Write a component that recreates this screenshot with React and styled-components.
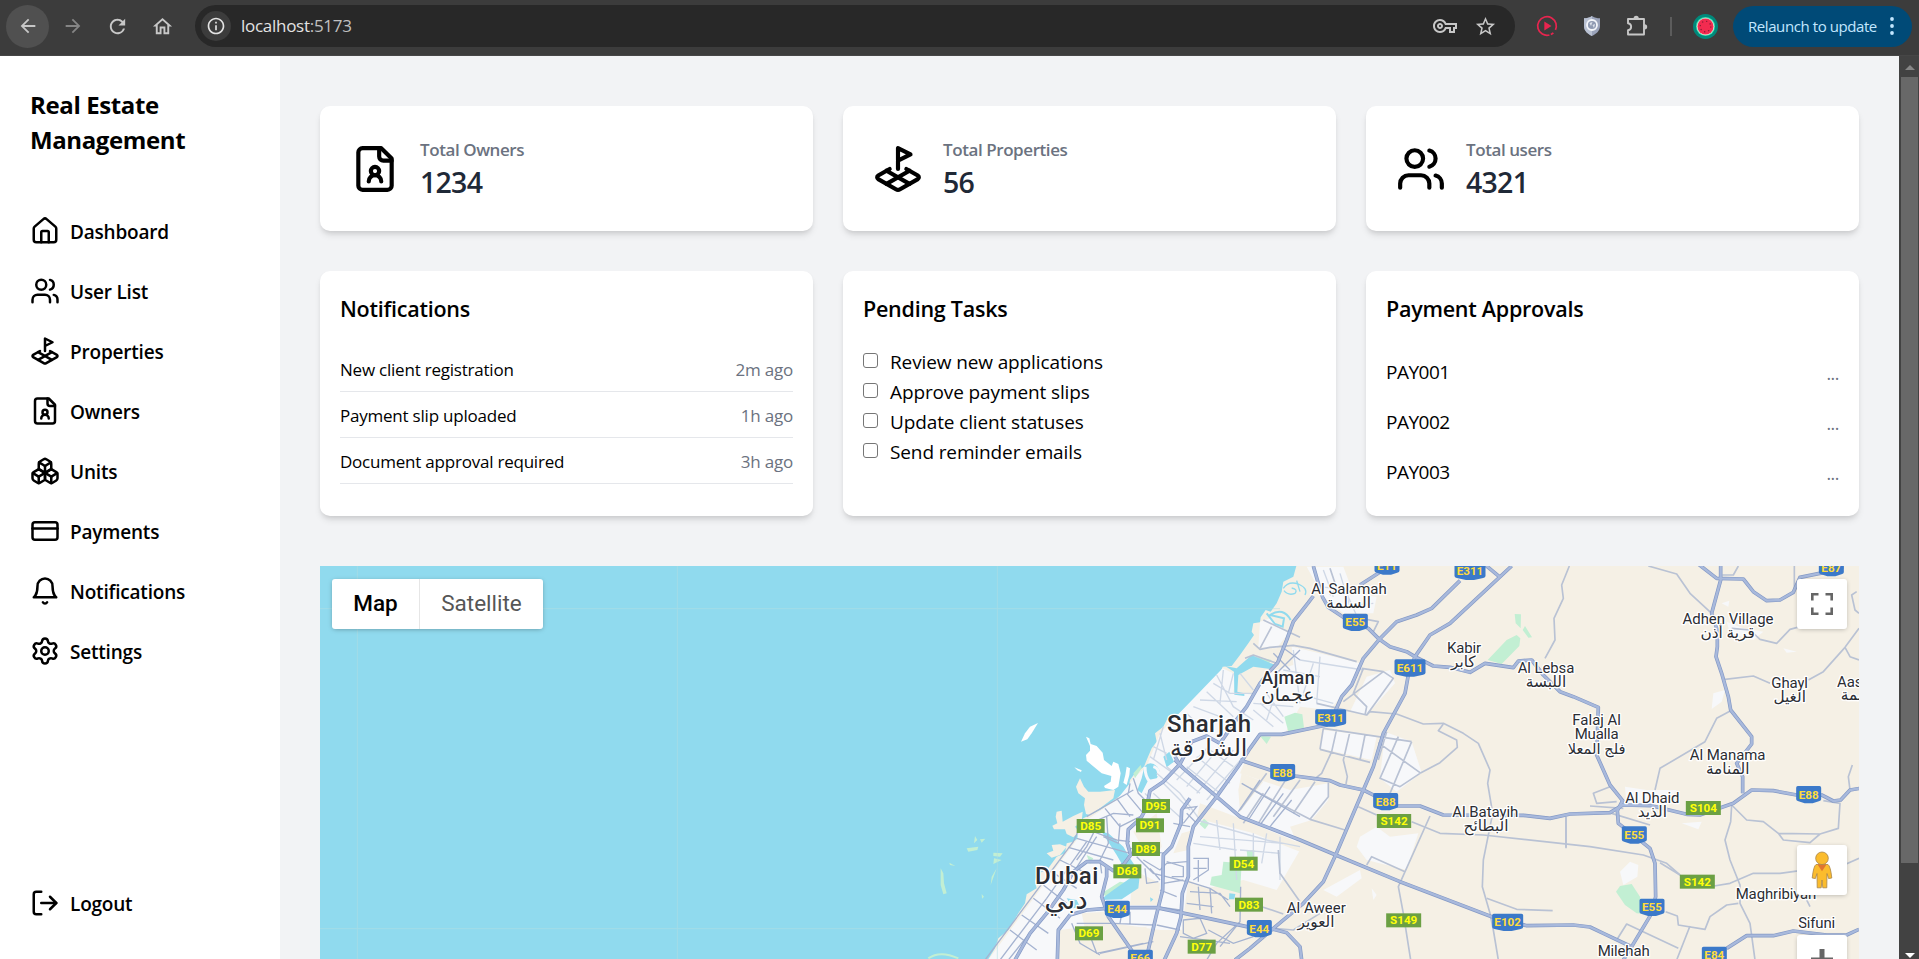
import React from 'react';
import styled, { createGlobalStyle, css } from 'styled-components';
import {
  Users, LandPlot, Boxes, CreditCard, Settings, LogOut, House,
} from 'lucide-react';
import {
  MdArrowBack, MdArrowForward, MdRefresh, MdOutlineHome, MdInfoOutline,
  MdOutlineVpnKey, MdStarOutline,
} from 'react-icons/md';

const ui = `"Open Sans", "Noto Sans", sans-serif`;

const GlobalStyle = createGlobalStyle`
  *, *::before, *::after { box-sizing: border-box; }
  html, body { margin: 0; padding: 0; }
  body { font-family: ${ui}; color: #000; background: #f2f3f5; overflow: hidden; }
  h1, h2, p, ul { margin: 0; padding: 0; }
  ul { list-style: none; }
  button { border: 0; padding: 0; background: none; font: inherit; color: inherit; }
`;

const Screen = styled.div`
  width: 1919px;
  height: 959px;
  display: flex;
  flex-direction: column;
  overflow: hidden;
`;

/* ---------- browser bar ---------- */

const BrowserBar = styled.header`
  flex: 0 0 56px;
  display: flex;
  align-items: center;
  padding: 0 7px 3px 6px;
  background: #3c3c3c;
  border-bottom: 1px solid #464646;
`;

const BarButton = styled.button`
  width: ${(p) => p.$width || 45}px;
  height: 42px;
  display: flex;
  align-items: center;
  justify-content: center;
  color: ${(p) => (p.$muted ? '#858585' : '#c7c7c7')};
`;

const BackButton = styled(BarButton)`
  width: 43px;
  height: 43px;
  margin-right: 1px;
  border-radius: 50%;
  background: #505050;
`;

const Omnibox = styled.div`
  flex: 1;
  height: 42px;
  margin: 0 9px 0 10px;
  padding: 0 10px 0 6px;
  display: flex;
  align-items: center;
  border-radius: 21px;
  background: #282828;
`;

const SiteInfo = styled.span`
  width: 30px;
  height: 30px;
  display: flex;
  align-items: center;
  justify-content: center;
  border-radius: 50%;
  background: #3c3c3c;
  color: #e3e3e3;
`;

const Url = styled.span`
  flex: 1;
  padding: 0 0 0 10px;
  font-size: 17px;
  line-height: 24px;
  letter-spacing: -0.28px;
  color: #e3e3e3;
`;

const Port = styled.span`
  color: #c0c0c0;
`;

const BarDivider = styled.span`
  width: 2px;
  height: 19px;
  margin: 0 21px 0 11px;
  background: #5c5c5c;
`;

const Relaunch = styled.button`
  width: 179px;
  height: 41px;
  margin-left: 15px;
  padding: 0 18px 0 15px;
  display: flex;
  align-items: center;
  justify-content: space-between;
  border-radius: 21px;
  background: #004a77;
  color: #c2e7ff;
  font-size: 15px;
  letter-spacing: -0.42px;
  white-space: nowrap;
`;

/* ---------- page frame ---------- */

const Page = styled.div`
  flex: 1;
  min-height: 0;
  display: flex;
`;

const Sidebar = styled.aside`
  flex: 0 0 280px;
  display: flex;
  flex-direction: column;
  padding: 31px 30px 40px;
  background: #fff;
`;

const Brand = styled.h1`
  font-size: 24px;
  font-weight: 700;
  line-height: 35px;
  letter-spacing: -0.38px;
`;

const Nav = styled.nav`
  flex: 1;
  display: flex;
  flex-direction: column;
  gap: 30px;
  margin-top: 60px;
`;

const NavItem = styled.a`
  height: 30px;
  display: flex;
  align-items: center;
  gap: 10px;
  font-size: 19px;
  font-weight: 550;
  line-height: 30px;
  letter-spacing: -0.2px;

  svg { flex: none; margin-top: -2px; }
`;

const Main = styled.main`
  flex: 1;
  min-width: 0;
  display: flex;
  flex-direction: column;
  padding: 50px 40px 0;
  background: #f2f3f5;
`;

const CardGrid = styled.section`
  display: grid;
  grid-template-columns: repeat(3, 1fr);
  gap: 30px;
  margin-bottom: ${(p) => p.$below}px;
`;

const cardSurface = css`
  border-radius: 10px;
  background: #fff;
  box-shadow: 0 5px 7.5px -1px rgba(0, 0, 0, 0.1), 0 2.5px 5px -2px rgba(0, 0, 0, 0.1);
`;

const StatCard = styled.article`
  ${cardSurface}
  height: 125px;
  padding: 2px 30px 0;
  display: flex;
  align-items: center;
  gap: 20px;

  > svg { margin-top: -2px; }
`;

const StatLabel = styled.p`
  font-size: 17px;
  font-weight: 550;
  line-height: 25px;
  letter-spacing: -0.42px;
  color: #6b7280;
`;

const StatValue = styled.p`
  padding-bottom: 1px;
  font-size: 28.5px;
  font-weight: 550;
  line-height: 40px;
  letter-spacing: -0.75px;
  color: #1f2937;
`;

const ListCard = styled.article`
  ${cardSurface}
  height: 245px;
  padding: 20px;
`;

const CardTitle = styled.h2`
  margin-bottom: 20px;
  font-size: 21.5px;
  font-weight: 550;
  line-height: 35px;
  letter-spacing: -0.25px;
`;

const NoticeRow = styled.li`
  height: 46px;
  padding-top: 1px;
  display: flex;
  align-items: center;
  justify-content: space-between;
  border-bottom: 1px solid #e5e7eb;
  font-size: 17px;
  letter-spacing: -0.22px;
`;

const Muted = styled.span`
  color: #6b7280;
`;

const TaskList = styled.ul`
  padding-top: 1px;
`;

const TaskRow = styled.li`
  height: 30px;
  display: flex;
  align-items: center;
  gap: 12px;
  font-size: 19px;
  letter-spacing: -0.12px;
`;

const Checkbox = styled.span`
  width: 15px;
  height: 15px;
  margin-top: -3px;
  border: 1px solid #767676;
  border-radius: 3px;
  background: #fff;
`;

const PaymentRow = styled.li`
  height: 50px;
  padding-top: 1px;
  display: flex;
  align-items: center;
  justify-content: space-between;
  font-size: 19px;
  letter-spacing: -0.5px;
`;

const Dots = styled(Muted)`
  padding-top: 2px;
  font-size: 17.5px;
  letter-spacing: -0.4px;
`;

/* ---------- scrollbar ---------- */

const Scrollbar = styled.div`
  flex: 0 0 20px;
  display: flex;
  flex-direction: column;
  align-items: center;
  padding: 9px 1px 0 2px;
  background: #424242;
`;

const Thumb = styled.div`
  width: 17px;
  height: 786px;
  margin: 7px 0 90px;
  background: #686868;
`;

const Arrow = styled.span`
  border: 5px solid transparent;
  border-top-width: ${(p) => (p.$down ? 5 : 0)}px;
  border-bottom-width: ${(p) => (p.$down ? 0 : 5)}px;
  ${(p) => (p.$down ? 'border-top-color: #fff' : 'border-bottom-color: #868686')};
`;

/* ---------- map ---------- */

const MapFrame = styled.section`
  flex: 1;
  min-height: 0;
  position: relative;
  overflow: hidden;

  > svg { display: block; }
`;

const MapType = styled.div`
  position: absolute;
  top: 13px;
  left: 12px;
  height: 50px;
  display: flex;
  border-radius: 3px;
  background: #fff;
  box-shadow: 0 1px 5px -1px rgba(0, 0, 0, 0.35);
  font-family: Roboto, sans-serif;
  font-size: 22.5px;
  line-height: 47px;
`;

const MapTypeOption = styled.button`
  width: ${(p) => p.$width}px;
  padding-bottom: 2px;
  color: ${(p) => (p.$active ? '#000' : '#565656')};
  font-weight: ${(p) => (p.$active ? 500 : 400)};
  & + & { border-left: 1px solid #e6e6e6; }
`;

const MapButton = styled.button`
  position: absolute;
  top: ${(p) => p.$top}px;
  right: 12px;
  width: 50px;
  height: 50px;
  display: flex;
  align-items: center;
  justify-content: center;
  border-radius: 3px;
  background: #fff;
  box-shadow: 0 1px 5px -1px rgba(0, 0, 0, 0.3);
`;

const MapText = styled.text`
  font-family: Roboto, "DejaVu Sans", sans-serif;
  font-weight: ${(p) => (p.$city ? 500 : 400)};
  fill: #2b2d33;
  stroke: ${(p) => (p.$halo ? '#fff' : 'none')};
  stroke-width: 8px;
  stroke-linejoin: round;
  paint-order: stroke;
  text-anchor: middle;
`;

const ShieldText = styled.text`
  font-family: Roboto, sans-serif;
  font-weight: 700;
  font-size: 35px;
  text-anchor: middle;
  fill: ${(p) => p.$fill};
`;

/* The map is drawn on a canvas of three units to the pixel, in three sheets
   side by side: west starts at 0, mid at 1050, east at 1980. */
const SHEET = { w: 0, m: 1050, e: 1980 };

const HIGHWAYS = [
  ['w', 'M1240,108 L1225,128 L1180,185 L1160,240 L1133,308 L1108,335 L1080,370 L1040,440 L1005,485 L960,550 L920,528 L875,545 L840,612 L790,665 L750,692 L740,742 L722,775 L685,808 L682,850 L692,885 L672,912 L640,932 L600,905 L560,905 L520,935 L490,990 L440,1060 L390,1120 L345,1200'],
  ['w', 'M1680,62 L1595,145 L1550,165 L1490,185 L1438,238 L1390,295 L1355,375 L1325,410 L1305,455 L1280,495 L1145,523 L1080,523 L1050,565 L1020,612 L950,710 L880,800 L865,860 L865,950 L847,1000 L843,1070 L830,1120 L793,1200'],
  ['w', 'M825,590 L840,615'],
  ['m', 'M785,18 L600,190 L540,225 L495,290 L475,345 L465,400 L400,520 L370,620 L340,690 L257,885 L220,965 L160,1030 L70,1105 L0,1165 L-45,1200'],
  ['m', 'M190,18 L202,60 L218,112 L235,142 L280,172 L355,205 L388,238 L420,260 L470,275 L495,290 L550,318 L600,322 L660,337 L705,310 L790,323 L805,303 L845,300 L880,345 L930,395 L970,410 L1045,442 L1040,585 L1080,675 L1118,722 L1102,752 L1105,790 L1150,825 L1200,865 L1215,910 L1217,1010 L1205,1060 L1145,1160 L1120,1200'],
  ['w', 'M1020,600 L1110,630 L1185,648 L1290,662 L1320,675 L1390,690 L1430,710 L1490,738 L1560,738 L1630,765 L1870,766 L1950,775 L2010,762 L2130,758 L2168,735 L2255,737 L2360,763 L2400,765 L2500,730 L2555,690 L2620,692 L2690,705 L2765,705 L2800,723 L2822,720 L2850,690 L2880,685'],
  ['w', 'M825,600 L850,625 L950,710 L1020,770 L1200,840 L1307,885 L1500,965 L1775,1070 L1880,1097 L2020,1095 L2070,1101 L2110,1120 L2190,1158'],
  ['w', 'M472,1200 L475,1110 L510,1065 L560,1050 L620,1045 L690,1043 L770,1043 L900,1070 L1040,1100 L1120,1108 L1160,1118 L1200,1160 L1205,1200'],
  ['w', 'M715,1200 L625,1070 L605,1010 L620,950 L620,918'],
  ['w', 'M870,715 L845,750 L843,790 L815,860 L790,885 L788,990 L768,1070 L738,1200'],
  ['m', 'M330,75 L400,30'],
  ['m', 'M700,10 L748,50'],
  ['e', 'M412,10 L470,55 L550,57 L580,95 L620,122 L660,120 L700,97 L720,52 L790,38 L850,20'],
  ['e', 'M482,18 L482,60 L455,160 L472,210 L472,260 L468,290 L485,340 L505,410 L512,450 L575,530 L575,552 L530,610 L548,650 L548,700'],
  ['e', 'M500,1165 L560,1127 L640,1127 L700,1113 L800,1125 L860,1125 L897,1108'],
];

const ROADS = [
  ['m', 'M335,325 L400,335 L430,355 L350,465 L200,430'],
  ['m', 'M350,465 L360,455 L440,462 L520,492 L580,490 L640,520 L685,550 L720,630 L713,670 L728,760 L710,850 L700,900 L697,980 L720,1060 L730,1110 L745,1200'],
  ['m', 'M580,492 L565,512 L620,540 L622,562 L570,608 L510,640'],
  ['m', 'M10,250 L30,268 L60,262 L130,256 L180,265 L320,305'],
  ['m', 'M220,505 L485,545 M210,568 L360,607 M220,505 L210,568 M260,508 L245,575 L215,640 L190,660 M300,515 L280,600 L292,650 L288,672 M345,525 L330,600 M385,548 L510,638 M410,515 L385,600 M485,545 L420,700 M445,530 L390,655 L450,680 L510,640'],
  ['m', 'M340,325 L310,400 L350,440 L345,465 M400,335 L340,380 L280,425'],
  ['m', 'M235,668 L235,710 L180,778 M0,685 L180,778 L285,810 M110,655 L25,790 M150,660 L70,770 M195,665 L130,760 M50,640 L-30,750 M40,700 L-20,790'],
  ['m', 'M325,740 L380,765 M485,785 L570,820 L700,825 L1020,860 L1180,885 L1250,910 L1290,945'],
  ['m', 'M540,768 L445,980 L460,1060 L482,1200 M350,915 L365,890 L465,935'],
  ['m', 'M710,1015 L800,1048 L908,1052 M948,772 L948,865'],
  ['m', 'M958,18 L935,75 L940,115 L912,175 L915,240 L885,295'],
  ['m', 'M85,870 L90,940 L150,1025 M35,1040 L100,1062 M70,1105 L130,1110 L210,1060'],
  ['m', 'M240,25 L260,85 L240,105 M280,165 L385,185 L370,215'],
  ['e', 'M265,18 L350,42 L390,100 L455,160 M487,45 L520,45 L535,18 M703,18 L703,100'],
  ['e', 'M495,358 L580,348 L630,370 M745,360 L790,335 L855,262 L897,205 M855,262 L870,290 L897,300'],
  ['e', 'M890,95 L875,105 L885,150 L897,160'],
  ['e', 'M515,205 L570,210 L600,238 L650,250 L690,208 L720,200'],
  ['e', 'M512,452 L470,475 L435,545 L300,625 L285,690'],
  ['e', 'M515,735 L512,785 L495,840 L510,900 L540,975 L540,1030 L570,1090 L585,1200'],
  ['e', 'M515,735 L560,780 L610,785 L655,820 L780,822 L835,805 L840,730 L790,722 M655,820 L670,840 L750,848 L780,822'],
  ['e', 'M360,945 L300,908 M462,978 L510,970 L580,940 L660,940 L720,932 M840,920 L897,895'],
  ['e', 'M317,1055 L352,1068 L355,1095 L435,1108 L450,1070 L500,1035 L535,1030'],
  ['e', 'M170,1140 L200,1092 L355,1165 M390,1098 L350,1200'],
  ['e', 'M150,680 L100,700 L110,730 L170,725 M90,738 L190,745 M155,760 L270,795'],
  ['e', 'M18,770 L18,862 M870,690 L865,650 L877,615 M720,980 L750,1040'],
  ['w', 'M1090,180 L1200,232 M1115,200 L1080,265 M1035,295 L1060,285 L1130,310'],
];

const CITY_ROADS = [
  'M255,1200 L520,845 L545,790 M300,1200 L440,1015 L560,845 M325,1200 L460,1030 L590,830',
  'M330,1110 L410,1170 M365,1065 L445,1120 M400,1015 L480,1075 M430,975 L500,1030 M455,935 L530,985 M480,900 L560,940 M505,862 L640,900 M530,835 L690,880',
  'M560,770 L700,690 M570,790 L640,760 L700,765 M615,745 L660,800 L720,770 M650,715 L690,770 M680,700 L730,760 M540,800 L620,830 L650,840 L690,845 M620,770 L625,850 L600,900 L605,940',
  'M700,655 L715,700 L735,720 M690,670 L685,700 M660,790 L655,850 L610,830 M590,800 L560,860 L530,900',
  'M530,1090 L640,1090 L760,1095 M560,1100 L590,1180 L730,1150 M600,1180 L760,1145 M515,1090 L540,1150 L600,1185 M665,1060 L660,1090 M690,1055 L690,1092',
  'M710,890 L760,940 L860,965 M730,900 L780,930 L800,910 L860,905 M735,925 L740,970 L775,965 M750,925 L780,960 M780,990 L830,1010 M790,970 L850,960 M770,1040 L840,1050 M800,905 L850,920 L850,950 L815,950',
  'M880,895 L925,895 L925,930 L880,960 M880,925 L920,925 M895,900 L895,965 M865,965 L930,985 L985,1020 M870,995 L960,1000 L990,1040 M895,980 L900,1050 M930,985 L935,1060 M860,1030 L940,1040 M850,1080 L900,1075 L920,1120 L880,1135 L850,1120 Z',
  'M1022,980 L1020,1085 L950,1150 L920,1200 M925,1110 L1000,1150 L1060,1130 M960,1160 L1020,1085 M840,1110 L770,1095 M840,1130 L990,1150',
  'M850,745 L890,740 L850,790 M860,760 L890,790 M820,790 L870,800 M795,880 L690,865',
  'M1025,670 L1200,770 M1080,660 L1015,755 M1110,680 L1045,780 M1150,700 L1080,795 M1175,720 L1110,800',
  'M1120,280 L1170,330 M1145,260 L1200,300 M1200,270 L1130,340',
];

const PALE_ROADS = [
  'M860,680 L960,560 M830,660 L930,555 M890,700 L1000,570 M920,720 L1030,590 M770,640 L840,700 L900,780 M800,620 L900,700 M860,620 L960,700 M890,590 L990,670 M930,570 L1000,620 M760,700 L850,780 M790,670 L870,750',
  'M950,345 L1000,440 L1060,480 M940,370 L990,400 L1060,400 M920,395 L1000,470 M900,420 L1010,425 M880,440 L960,470 M970,330 L960,430 M1000,340 L985,400 M860,460 L900,500 M1020,340 L1060,390 M1060,450 L1120,500 M1080,430 L1150,490 M1100,400 L1150,470 M1130,390 L1100,480 M1060,430 L1180,440',
  'M890,780 L1100,840 L1200,860 M900,830 L1150,850 M1000,790 L1010,960 M950,780 L960,870 M1060,820 L1060,900 M1100,820 L1085,910 M880,850 L1010,870 M1020,870 L1140,880 M1140,830 L1140,960',
  'M780,520 L800,600 M790,500 L760,600 M750,590 L820,640 M735,700 L770,740 M760,560 L800,580',
  'M1180,270 L1200,430 M1240,310 L1210,400 M1150,330 L1260,350 M1260,290 L1250,430 M1200,300 L1390,330 M1190,400 L1300,430',
  'M1270,30 L1300,110 M1320,40 L1350,140 M1250,80 L1370,90 M1310,140 L1420,130 M1340,100 L1380,190',
];

const E_SHIELDS = [
  ['w', 'E88', 1148, 638, 75], ['w', 'E44', 652, 1048, 75], ['w', 'E44', 1078, 1106, 75], ['w', 'E66', 721, 1195, 75],
  ['m', 'E11', 411, 18, 75], ['m', 'E311', 660, 34, 93], ['m', 'E55', 316, 187, 75], ['m', 'E611', 480, 324, 93],
  ['m', 'E311', 242, 474, 93], ['m', 'E88', 407, 725, 75], ['m', 'E102', 773, 1087, 93],
  ['e', 'E87', 814, 23, 75], ['e', 'E88', 746, 704, 75], ['e', 'E55', 223, 825, 75], ['e', 'E55', 276, 1042, 75], ['e', 'E84', 463, 1186, 75],
];

const D_SHIELDS = [
  ['w', 'D95', 768, 738], ['w', 'D85', 572, 798], ['w', 'D91', 750, 796], ['w', 'D89', 738, 867], ['w', 'D68', 682, 934],
  ['w', 'D54', 1031, 911], ['w', 'D83', 1047, 1034], ['w', 'D69', 567, 1120], ['w', 'D77', 905, 1160],
  ['m', 'S142', 432, 783, 103], ['m', 'S149', 461, 1081, 105], ['e', 'S104', 430, 744, 105], ['e', 'S142', 412, 965, 105],
];

/* sheet, text, centre x, baseline, width (0 for Arabic), size, city */
const LABELS = [
  ['w', 'Sharjah', 927, 515, 252, 72, 1], ['w', 'الشارقة', 926, 588, 0, 71],
  ['w', 'Dubai', 500, 973, 190, 72, 1], ['w', 'دبي', 498, 1046, 0, 84],
  ['m', 'Ajman', 114, 371, 160, 54, 1], ['m', 'عجمان', 113, 424, 0, 56],
  ['m', 'Al Salamah', 297, 102, 226, 45], ['m', 'السلمة', 296, 143, 0, 46],
  ['m', 'Kabir', 642, 280, 102, 45], ['m', 'كابر', 640, 322, 0, 46],
  ['m', 'Al Lebsa', 888, 339, 170, 45], ['m', 'اللبسة', 888, 380, 0, 46],
  ['m', 'Al Batayih', 706, 771, 198, 45], ['m', 'البطائح', 708, 813, 0, 46],
  ['m', 'Al Aweer', 199, 1060, 177, 45], ['m', 'العوير', 198, 1101, 0, 46],
  ['e', 'Adhen Village', 504, 193, 273, 45], ['e', 'قرية أذن', 503, 233, 0, 46],
  ['e', 'Ghayl', 689, 385, 110, 45], ['e', 'الغيل', 689, 427, 0, 46],
  ['e', 'Aasimah', 918, 380, 174, 45], ['e', 'عاصمة', 908, 420, 0, 46],
  ['e', 'Falaj Al', 110, 494, 146, 45], ['e', 'Mualla', 110, 538, 132, 45], ['e', 'فلج المعلا', 110, 581, 0, 44],
  ['e', 'Al Manama', 503, 600, 227, 45], ['e', 'المنامة', 503, 643, 0, 46],
  ['e', 'Al Dhaid', 277, 728, 163, 45], ['e', 'الذيد', 277, 770, 0, 46],
  ['e', 'Maghribiyah', 648, 1016, 242, 45], ['e', 'Sifuni', 770, 1104, 111, 45], ['e', 'Milehah', 191, 1188, 156, 45],
];

/* Arabic lines first, so that no halo covers a Latin descender. */
const LABEL_ORDER = [...LABELS].sort((a, b) => (a[4] ? 1 : 0) - (b[4] ? 1 : 0));

const sheetShift = (s) => `translate(${SHEET[s]} 0)`;

function RoadLayer({ roads, color, width }) {
  return (
    <g fill="none" stroke={color} strokeWidth={width} strokeLinejoin="round">
      {roads.map(([sheet, d]) => <path key={sheet + d} d={d} transform={sheetShift(sheet)} />)}
    </g>
  );
}

function Terrain() {
  return (
    <>
      <rect x="-1800" width="4800" height="1300" fill="#90daee" />
      <path
        fill="#f5f0e5"
        d="M1194,0 L1180,50 L1150,65 L1145,95 L1130,130 L1112,155 L1097,150 L1082,172 L1080,187 L1060,190 L1055,215 L1062,225 L1045,250 L1020,285 L995,318 L968,320 L960,340 L940,362 L925,390 L900,415 L855,445 L840,460 L800,480 L790,500 L765,520 L770,545 L755,565 L740,600 L732,620 L705,640 L690,660 L685,690 L650,715 L600,750 L550,775 L538,785 L530,810 L534,835 L520,845 L500,850 L495,880 L470,890 L445,925 L410,945 L405,965 L410,985 L380,1003 L375,1030 L355,1060 L325,1110 L295,1135 L285,1165 L260,1205 L3000,1205 L3000,0 Z"
      />
      <g fill="#f5f0e5">
        <path d="M540,655 L552,680 L565,695 L600,695 L645,690 L640,715 L600,745 L570,765 L558,762 L552,735 L555,715 L535,700 L528,680 Z" />
        <path d="M470,755 L485,752 L488,785 L520,768 L548,755 L545,785 L525,800 L538,815 L520,832 L500,822 L495,808 L462,808 L457,797 L472,790 L467,770 Z" />
        <path d="M455,855 L480,853 L500,860 L480,885 L455,893 L440,880 L460,872 Z" />
      </g>
      <g fill="#fff">
        <path d="M558,530 L568,535 L572,552 L590,558 L608,578 L612,600 L635,618 L640,605 L655,612 L662,640 L655,680 L640,690 L615,684 L612,678 L632,665 L634,648 L605,640 L575,615 L560,602 L558,585 L570,572 L570,558 Z" />
        <path d="M414,489 L395,520 L382,538 L363,545 L375,520 L390,500 Z" />
        <path d="M523,622 L545,631 L543,636 L532,631 Z M680,620 L690,625 L688,645 L680,675 L670,668 L676,645 Z" />
      </g>
      <g fill="#f7f8fa">
        <path d="M968,325 L1010,345 L1000,395 L1060,405 L1110,335 L1180,315 L1175,260 L1240,275 L1380,310 L1360,370 L1325,405 L1290,450 L1200,440 L1155,520 L1080,520 L1040,590 L1020,640 L1170,690 L1285,670 L1285,720 L1235,780 L1170,800 L1200,870 L1130,990 L1030,960 L920,985 L865,960 L845,1110 L780,1110 L640,1090 L480,1110 L470,1200 L265,1200 L360,1070 L530,840 L545,790 L650,720 L705,650 L740,620 L780,520 Z" />
        <path d="M1080,185 L1110,175 L1165,220 L1130,265 L1075,262 Z M1220,20 L1330,20 L1360,100 L1430,110 L1420,160 L1330,160 L1270,110 Z" />
        <path d="M1270,510 L1430,530 L1415,600 L1260,565 Z M1455,515 L1535,545 L1565,638 L1490,695 L1440,655 Z M1400,350 L1470,330 L1485,370 L1400,465 L1350,455 Z" />
        <path d="M1380,830 L1430,800 L1470,830 L1555,820 L1520,930 L1460,915 L1400,900 L1370,860 Z" />
        <path d="M1270,990 L1380,930 L1385,955 L1310,1010 Z M1415,985 L1430,1005 L1420,1020 Z" />
        <path d="M2440,400 L2475,390 L2465,425 L2435,447 Z M2190,905 L2215,915 L2212,950 L2170,975 L2160,935 Z M2175,680 L2240,690 L2330,690 L2300,730 L2180,740 Z M2345,790 L2405,785 L2395,808 Z M2465,130 L2488,122 L2485,140 Z M2480,185 L2530,205 L2590,215 L2560,240 L2490,220 Z M2650,265 L2690,275 L2660,278 Z" />
      </g>
      <g fill="#f5f0e5">
        <path d="M1025,640 L1090,665 L1020,755 L1015,690 Z M700,815 L770,760 L785,860 L770,885 L720,850 Z M545,1060 L615,1055 L650,1120 L560,1130 Z M790,1110 L840,1110 L800,1200 L745,1200 Z M640,1110 L740,1100 L720,1190 L680,1140 Z M845,820 L880,810 L865,870 L820,880 Z M980,1060 L1200,1140 L1200,1205 L840,1205 L860,1130 Z M700,930 L780,970 L775,1035 L690,1035 Z M900,730 L1020,775 L1200,850 L1200,875 L1060,820 L890,775 Z" />
      </g>
      <g fill="#c2efd3">
        <path d="M970,905 L1025,910 L1020,1000 L930,975 L935,950 L965,945 Z M1040,872 L1063,870 L1063,890 L1042,890 Z M912,776 L928,790 L915,808 L898,792 Z" />
        <path d="M1153,470 L1185,458 L1207,463 L1212,503 L1165,515 Z M1080,528 L1113,530 L1100,552 Z M1070,290 L1115,300 L1105,312 L1080,303 Z" />
        <path d="M713,300 L770,240 L800,225 L811,235 L808,258 L755,312 Z M794,162 L813,163 L812,205 L797,190 Z M825,198 L846,232 L835,233 L818,210 Z" transform={sheetShift('m')} />
        <path d="M168,995 L180,978 L215,972 L240,1010 L255,1062 L230,1060 L195,1035 Z" transform={sheetShift('e')} />
        <path d="M122,925 L130,940 L132,970 L140,1000 L130,1003 L122,975 Z M225,828 L232,840 L222,850 Z M240,838 L256,836 L245,848 Z M200,865 L235,860 L232,870 L205,875 Z M280,878 L308,880 L300,890 L280,888 Z M282,895 L305,900 L280,912 Z M290,925 L272,975 L275,950 Z M245,1002 L252,1010 L246,1016 Z M148,908 L166,918 L150,915 Z" />
        <path d="M700,640 L722,615 L725,625 L705,655 Z M640,855 L665,880 L700,925 L690,930 L655,890 Z M605,1000 L660,965 L675,968 L625,1015 Z M560,885 L580,895 L570,912 Z" />
      </g>
      <g fill="#90daee">
        <path d="M733,620 Q750,600 772,620 Q788,640 770,655 L745,660 L725,700 L712,690 L725,655 Z" />
        <path d="M605,815 L625,820 L670,860 L690,895 L720,940 L715,985 L665,1018 L600,1020 L640,990 L690,955 L650,885 Z" />
        <path d="M790,590 L808,575 L822,605 L800,622 Z M500,1015 L530,1020 L540,1040 L520,1045 Z M988,1000 L1006,1002 L1003,1018 L987,1018 Z M750,1012 L760,1018 L752,1026 Z" />
        <path d="M975,318 L1010,325 L1055,285 L1125,315 L1120,328 L1060,320 L1015,345 L1012,395 L1033,400 L1033,408 L1003,404 L1002,335 Z" />
      </g>
      <g fill="none" stroke="#90daee" strokeWidth="6">
        <path d="M1100,160 L1125,192 L1148,200 L1152,175 L1110,165 Q1150,140 1172,180" />
        <path d="M1150,85 Q1165,62 1195,72 Q1225,85 1215,105 M1152,92 Q1165,108 1185,100 Q1195,88 1175,84 M1190,62 L1200,95" strokeWidth="4" />
      </g>
      <path d="M735,620 Q735,650 750,665 M760,620 Q780,625 775,650" fill="none" stroke="#f7f8fa" strokeWidth="9" />
      <path d="M85,1195 Q120,1170 175,1195" fill="none" stroke="#c2efd3" strokeWidth="6" />
    </>
  );
}

function MapArt() {
  return (
    <svg width="1539" height="400" viewBox="-1740 18 4617 1200">
      <Terrain />
      <g stroke="#b5dfe2" strokeWidth="2.5" opacity=".65">
        <path d="M-1740,146 H1140 M-1740,1106 H325 M-1628,0 V1200 M-668,0 V1200 M292,0 V1200" />
      </g>
      <g fill="none" stroke="#cfd8e6" strokeWidth="4">{PALE_ROADS.map((d) => <path key={d} d={d} />)}</g>
      <RoadLayer roads={ROADS} color="#b9c2d4" width="5" />
      <g fill="none" stroke="#a5b3d0" strokeWidth="4">{CITY_ROADS.map((d) => <path key={d} d={d} />)}</g>
      <RoadLayer roads={HIGHWAYS} color="#8499c5" width="11" />
      <RoadLayer roads={HIGHWAYS} color="#a8b9dc" width="7" />
      {LABEL_ORDER.map(([sheet, text, x, y, length, size, city]) => (
        <MapText
          key={text + x}
          $halo
          $city={city}
          x={SHEET[sheet] + x}
          y={y}
          fontSize={size}
          textLength={length || undefined}
        >
          {text}
        </MapText>
      ))}
      {E_SHIELDS.map(([sheet, text, x, y, w]) => (
        <g key={text + x} transform={`translate(${SHEET[sheet] + x} ${y})`}>
          <path
            fill="#3b79c9"
            d={`M${-w / 2 + 5},-26 H${w / 2 - 5} q5,0 5,5 V14 q0,5 -7,6 L12,26 H-12 L${-w / 2 + 7},20 q-7,-1 -7,-6 V-21 q0,-5 5,-5 Z`}
          />
          <ShieldText $fill="#ffdc3c" y="12">{text}</ShieldText>
        </g>
      ))}
      {D_SHIELDS.map(([sheet, text, x, y, w = 84]) => (
        <g key={text + x} transform={`translate(${SHEET[sheet] + x} ${y})`}>
          <rect x={-w / 2} y="-21" width={w} height="42" fill="#6ba043" />
          <ShieldText $fill="#ffff0a" y="12">{text}</ShieldText>
        </g>
      ))}
    </svg>
  );
}

/* ---------- icons ---------- */

const LineIcon = ({ size = 30, children }) => (
  <svg width={size} height={size} viewBox="0 0 24 24" fill="none" stroke="currentColor" strokeWidth="2" strokeLinecap="round" strokeLinejoin="round">
    {children}
  </svg>
);

const BellIcon = ({ size }) => (
  <LineIcon size={size}>
    <path d="M6 8a6 6 0 0 1 12 0c0 7 3 9 3 9H3s3-2 3-9" />
    <path d="M10.3 21a1.94 1.94 0 0 0 3.4 0" />
  </LineIcon>
);

const OwnerFileIcon = ({ size }) => (
  <LineIcon size={size}>
    <path d="M15 2H6a2 2 0 0 0-2 2v16a2 2 0 0 0 2 2h12a2 2 0 0 0 2-2V7Z" />
    <path d="M14 2v4a2 2 0 0 0 2 2h4" />
    <circle cx="12" cy="13" r="2" />
    <path d="M15 18a3 3 0 1 0-6 0" />
  </LineIcon>
);

const PlayIcon = () => (
  <svg width="22" height="22" viewBox="0 0 22 22">
    <circle cx="11" cy="11" r="9.3" fill="none" stroke="#e8254f" strokeWidth="1.7" strokeDasharray="50 3.5 3 2" transform="rotate(75 11 11)" />
    <path d="M8.3 6.5 15.5 11 8.3 15.5Z" fill="#e8254f" />
  </svg>
);

const ShieldIcon = () => (
  <svg width="18" height="22" viewBox="0 0 18 22">
    <path d="M9 1 C12 3 14 3.2 17 3.2 V11 C17 16 13 19 9 21 C5 19 1 16 1 11 V3.2 C4 3.2 6 3 9 1Z" fill="#9aa3ba" />
    <path d="M9 1 C6 3 4 3.2 1 3.2 V11 C1 16 5 19 9 21Z" fill="#b9c1d2" />
    <circle cx="9" cy="10" r="5" fill="#8f9ab2" stroke="#f4f6fa" strokeWidth="1.8" />
    <path d="M6.5 8 9.5 7 8 11Z M9.5 10 12 9 11 13Z" fill="#dce1ea" />
  </svg>
);

const ExtensionsIcon = () => (
  <svg width="22" height="22" viewBox="0 0 22 22">
    <path d="M2 4 H18 V19.5 H2 V15.2 C6.2 14.6 6.2 8.9 2 8.3 Z" fill="none" stroke="currentColor" strokeWidth="1.9" strokeLinejoin="round" />
    <path d="M7.6 3.4 a2.6 2.6 0 0 1 5.2 0 Z M18.6 9.2 a2.6 2.6 0 0 1 0 5.2 Z" fill="currentColor" />
  </svg>
);

const MelonAvatar = () => (
  <svg width="25" height="25" viewBox="0 0 25 25">
    <circle cx="12.5" cy="12.5" r="12.5" fill="#00897b" />
    <circle cx="12.5" cy="12.5" r="9.5" fill="#4be3b4" />
    <circle cx="12.5" cy="12.5" r="8.6" fill="#fde7e2" />
    <circle cx="12.5" cy="12.5" r="8" fill="#f22b50" />
    <circle cx="12.5" cy="12.5" r="5.3" fill="none" stroke="#7d1c33" strokeWidth="1.2" strokeDasharray="1.2 2.96" />
  </svg>
);

const MenuDots = () => (
  <svg width="4" height="18" viewBox="0 0 4 18" fill="currentColor">
    <circle cx="2" cy="2" r="1.9" /><circle cx="2" cy="9" r="1.9" /><circle cx="2" cy="16" r="1.9" />
  </svg>
);

const FullscreenIcon = () => (
  <svg width="22" height="22" viewBox="0 0 22 22" fill="none" stroke="#666" strokeWidth="2.6">
    <path d="M1.3 7.5V1.3H7.5 M14.5 1.3H20.7V7.5 M20.7 14.5V20.7H14.5 M7.5 20.7H1.3V14.5" />
  </svg>
);

const PegmanIcon = () => (
  <svg width="22" height="38" viewBox="0 0 22 38">
    <path d="M5 13.5 H17 Q19.5 15 20.8 27 L17.6 27.6 L16 22.5 L15.8 36.8 H11.8 L11 29 L10.2 36.8 H6.2 L6 22.5 L4.4 27.6 L1.2 27 Q2.5 15 5 13.5Z" fill="#fbbc2d" stroke="#a8854a" strokeWidth=".8" />
    <path d="M6.5 13.6 H15.5 L11 20.3Z" fill="#e1752f" />
    <circle cx="11" cy="7.3" r="6.3" fill="#fbbc2d" stroke="#a8854a" strokeWidth=".8" />
  </svg>
);

const PlusIcon = () => (
  <svg width="22" height="22" viewBox="0 0 22 22"><path d="M11 0V22M0 11H22" stroke="#666" strokeWidth="5" /></svg>
);

/* ---------- content ---------- */

const NAV = [
  [House, 'Dashboard'], [Users, 'User List'], [LandPlot, 'Properties'], [OwnerFileIcon, 'Owners'],
  [Boxes, 'Units'], [CreditCard, 'Payments'], [BellIcon, 'Notifications'], [Settings, 'Settings'],
];
const STATS = [
  [OwnerFileIcon, 'Total Owners', '1234'], [LandPlot, 'Total Properties', '56'], [Users, 'Total users', '4321'],
];
const NOTICES = [
  ['New client registration', '2m ago'], ['Payment slip uploaded', '1h ago'], ['Document approval required', '3h ago'],
];
const TASKS = ['Review new applications', 'Approve payment slips', 'Update client statuses', 'Send reminder emails'];
const PAYMENTS = ['PAY001', 'PAY002', 'PAY003'];

export default function App() {
  return (
    <Screen>
      <GlobalStyle />
      <BrowserBar>
        <BackButton><MdArrowBack size={22} /></BackButton>
        <BarButton $muted><MdArrowForward size={22} /></BarButton>
        <BarButton><MdRefresh size={23} /></BarButton>
        <BarButton><MdOutlineHome size={23} /></BarButton>
        <Omnibox>
          <SiteInfo><MdInfoOutline size={20} /></SiteInfo>
          <Url>localhost<Port>:5173</Port></Url>
          <BarButton $width={40}><MdOutlineVpnKey size={24} /></BarButton>
          <BarButton $width={40}><MdStarOutline size={23} /></BarButton>
        </Omnibox>
        <BarButton><PlayIcon /></BarButton>
        <BarButton><ShieldIcon /></BarButton>
        <BarButton><ExtensionsIcon /></BarButton>
        <BarDivider />
        <MelonAvatar />
        <Relaunch>Relaunch to update<MenuDots /></Relaunch>
      </BrowserBar>
      <Page>
        <Sidebar>
          <Brand>Real Estate<br />Management</Brand>
          <Nav>
            {NAV.map(([Icon, label]) => <NavItem key={label}><Icon size={30} />{label}</NavItem>)}
          </Nav>
          <NavItem><LogOut size={30} />Logout</NavItem>
        </Sidebar>
        <Main>
          <CardGrid $below={40}>
            {STATS.map(([Icon, label, value]) => (
              <StatCard key={label}>
                <Icon size={50} />
                <div>
                  <StatLabel>{label}</StatLabel>
                  <StatValue>{value}</StatValue>
                </div>
              </StatCard>
            ))}
          </CardGrid>
          <CardGrid $below={50}>
            <ListCard>
              <CardTitle>Notifications</CardTitle>
              <ul>
                {NOTICES.map(([text, time]) => <NoticeRow key={text}>{text}<Muted>{time}</Muted></NoticeRow>)}
              </ul>
            </ListCard>
            <ListCard>
              <CardTitle>Pending Tasks</CardTitle>
              <TaskList>
                {TASKS.map((text) => <TaskRow key={text}><Checkbox />{text}</TaskRow>)}
              </TaskList>
            </ListCard>
            <ListCard>
              <CardTitle>Payment Approvals</CardTitle>
              <ul>
                {PAYMENTS.map((id) => <PaymentRow key={id}>{id}<Dots>...</Dots></PaymentRow>)}
              </ul>
            </ListCard>
          </CardGrid>
          <MapFrame>
            <MapArt />
            <MapType>
              <MapTypeOption $active $width={87}>Map</MapTypeOption>
              <MapTypeOption $width={124}>Satellite</MapTypeOption>
            </MapType>
            <MapButton $top={13}><FullscreenIcon /></MapButton>
            <MapButton $top={279}><PegmanIcon /></MapButton>
            <MapButton $top={369}><PlusIcon /></MapButton>
          </MapFrame>
        </Main>
        <Scrollbar>
          <Arrow />
          <Thumb />
          <Arrow $down />
        </Scrollbar>
      </Page>
    </Screen>
  );
}
